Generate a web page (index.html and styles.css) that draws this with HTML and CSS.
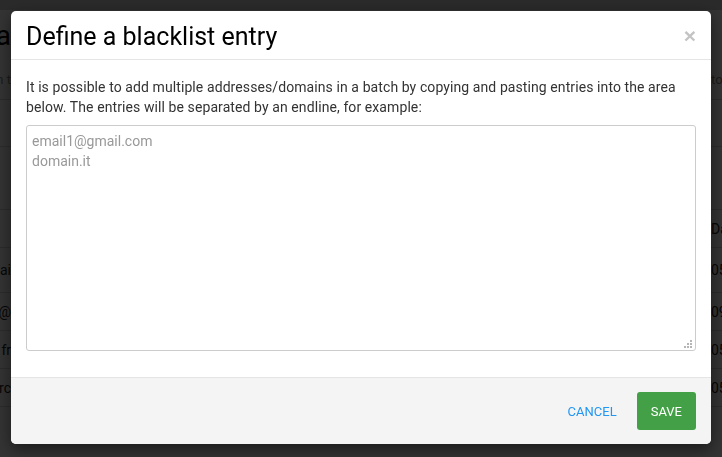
FILE: index.html
```html
<!DOCTYPE html>
<html lang="en">
<head>
    <meta charset="UTF-8">
    <meta name="viewport" content="width=device-width, initial-scale=1.0">
    <title>Blacklist</title>
    <link rel="stylesheet" href="styles.css">
</head>
<body>
    <!-- pagina sotto l'overlay, se ne vedono solo i bordi -->
    <div class="page">
        <div class="topbar"></div>
        <div class="row row-title">
            <div class="edge edge-left"><span>Blacklista</span></div>
            <div class="middle"></div>
            <div class="edge edge-right"></div>
        </div>
        <div class="row row-info">
            <div class="edge edge-left"><span class="muted">Manage the list in t</span></div>
            <div class="middle"></div>
            <div class="edge edge-right"><span class="muted">total</span></div>
        </div>
        <div class="row row-filter">
            <div class="edge edge-left"></div>
            <div class="middle"></div>
            <div class="edge edge-right"></div>
        </div>
        <div class="row row-gap">
            <div class="edge edge-left"></div>
            <div class="middle"></div>
            <div class="edge edge-right"></div>
        </div>
        <div class="row row-head">
            <div class="edge edge-left"></div>
            <div class="middle"></div>
            <div class="edge edge-right"><span>Date</span></div>
        </div>
        <div class="row row-data tall">
            <div class="edge edge-left"><span>domai</span></div>
            <div class="middle"></div>
            <div class="edge edge-right"><span>05/03/2019</span></div>
        </div>
        <div class="row row-data">
            <div class="edge edge-left"><span>x@</span></div>
            <div class="middle"></div>
            <div class="edge edge-right"><span>09/03/2019</span></div>
        </div>
        <div class="row row-data">
            <div class="edge edge-left"><span>fr</span></div>
            <div class="middle"></div>
            <div class="edge edge-right"><span>05/04/2019</span></div>
        </div>
        <div class="row row-data">
            <div class="edge edge-left"><span>erc</span></div>
            <div class="middle"></div>
            <div class="edge edge-right"><span>05/04/2019</span></div>
        </div>
    </div>

    <div class="overlay">
        <div class="modal">
            <div class="modal-header">
                <h4 class="modal-title">Define a blacklist entry</h4>
                <button class="close" type="button">&times;</button>
            </div>
            <div class="modal-body">
                <p>It is possible to add multiple addresses/domains in a batch by copying and pasting entries into the area below. The entries will be separated by an endline, for example:</p>
                <div class="entries-wrap">
                    <textarea class="entries" placeholder="email1@gmail.com&#10;domain.it"></textarea>
                    <!-- maniglia di ridimensionamento a puntini -->
                    <svg class="grip" width="8" height="8" viewBox="0 0 8 8">
                        <rect x="6" y="0" width="2" height="2" fill="#b5b5b5"/>
                        <rect x="3" y="3" width="2" height="2" fill="#b5b5b5"/>
                        <rect x="6" y="3" width="2" height="2" fill="#b5b5b5"/>
                        <rect x="0" y="6" width="2" height="2" fill="#b5b5b5"/>
                        <rect x="3" y="6" width="2" height="2" fill="#b5b5b5"/>
                        <rect x="6" y="6" width="2" height="2" fill="#b5b5b5"/>
                    </svg>
                </div>
            </div>
            <div class="modal-footer">
                <button class="btn btn-flat" type="button">Cancel</button>
                <button class="btn btn-save" type="button">Save</button>
            </div>
        </div>
    </div>
</body>
</html>
```

FILE: styles.css
```css
body {
    margin: 0;
    font-family: Roboto, "Liberation Sans", sans-serif;
    font-size: 14px;
    color: #333;
    background-color: #fff;
}

/* pagina di sfondo */
.topbar {
    height: 10px;
    background-color: #d0d0d0;
}
.row {
    display: flex;
    border-bottom: 1px solid #d6d6d6;
}
.edge {
    width: 11px;
    display: flex;
    align-items: center;
    overflow: hidden;
    white-space: nowrap;
}
.edge-left {
    justify-content: flex-end;
}
.edge-right {
    justify-content: flex-start;
}
.middle {
    flex: 1;
}
.row-title {
    height: 50px;
    border-bottom: none;
    font-size: 28px;
    color: #000;
}
.row-info {
    height: 39px;
    font-size: 13px;
}
.muted {
    color: #888;
}
.row-filter {
    height: 46px;
}
.row-gap {
    height: 62px;
}
.row-head {
    height: 37px;
    color: #222;
}
.row-data {
    height: 37px;
    color: #222;
}
.row-data.tall {
    height: 44px;
}

/* overlay e finestra */
.overlay {
    position: fixed;
    top: 0;
    left: 0;
    right: 0;
    bottom: 0;
    padding-bottom: 2px;
    background-color: rgba(0, 0, 0, 0.8);
    display: flex;
    justify-content: center;
    align-items: center;
}
.modal {
    width: 700px;
    background-color: #fff;
    border-radius: 5px;
    box-shadow: 0 5px 15px rgba(0, 0, 0, 0.5);
    overflow: hidden;
}
.modal-header {
    display: flex;
    justify-content: space-between;
    align-items: flex-start;
    padding: 12px 15px 8px;
    border-bottom: 1px solid #e5e5e5;
}
.modal-title {
    margin: 0;
    font-size: 25px;
    font-weight: 400;
    line-height: 28px;
    color: #000;
}
.close {
    padding: 0;
    margin-top: 2px;
    border: none;
    background: none;
    font-family: "Liberation Sans", sans-serif;
    font-size: 21px;
    font-weight: bold;
    line-height: 1;
    color: #c4c4c4;
    cursor: pointer;
}
.modal-body {
    padding: 17px 15px 26px;
}
.modal-body p {
    margin: 0 0 8px;
    line-height: 20px;
    letter-spacing: 0.09px;
}
.entries-wrap {
    position: relative;
}
.entries {
    display: block;
    box-sizing: border-box;
    width: 100%;
    height: 226px;
    margin: 0;
    padding: 5px;
    border: 1px solid #ccc;
    border-radius: 3px;
    resize: none;
    font-family: Roboto, "Liberation Sans", sans-serif;
    font-size: 14px;
    line-height: 20px;
    color: #333;
}
.entries::placeholder {
    color: #999;
}
.grip {
    position: absolute;
    right: 4px;
    bottom: 3px;
}
.modal-footer {
    display: flex;
    justify-content: flex-end;
    gap: 6px;
    padding: 14px 15px;
    border-top: 1px solid #e5e5e5;
    background-color: #f4f4f4;
}
.btn {
    height: 38px;
    padding: 0 14px;
    border: none;
    border-radius: 3px;
    font-family: Roboto, "Liberation Sans", sans-serif;
    font-size: 13px;
    text-transform: uppercase;
    cursor: pointer;
}
.btn-flat {
    background: none;
    color: #2196f3;
}
.btn-save {
    background-color: #43a047;
    color: #fff;
}
```
